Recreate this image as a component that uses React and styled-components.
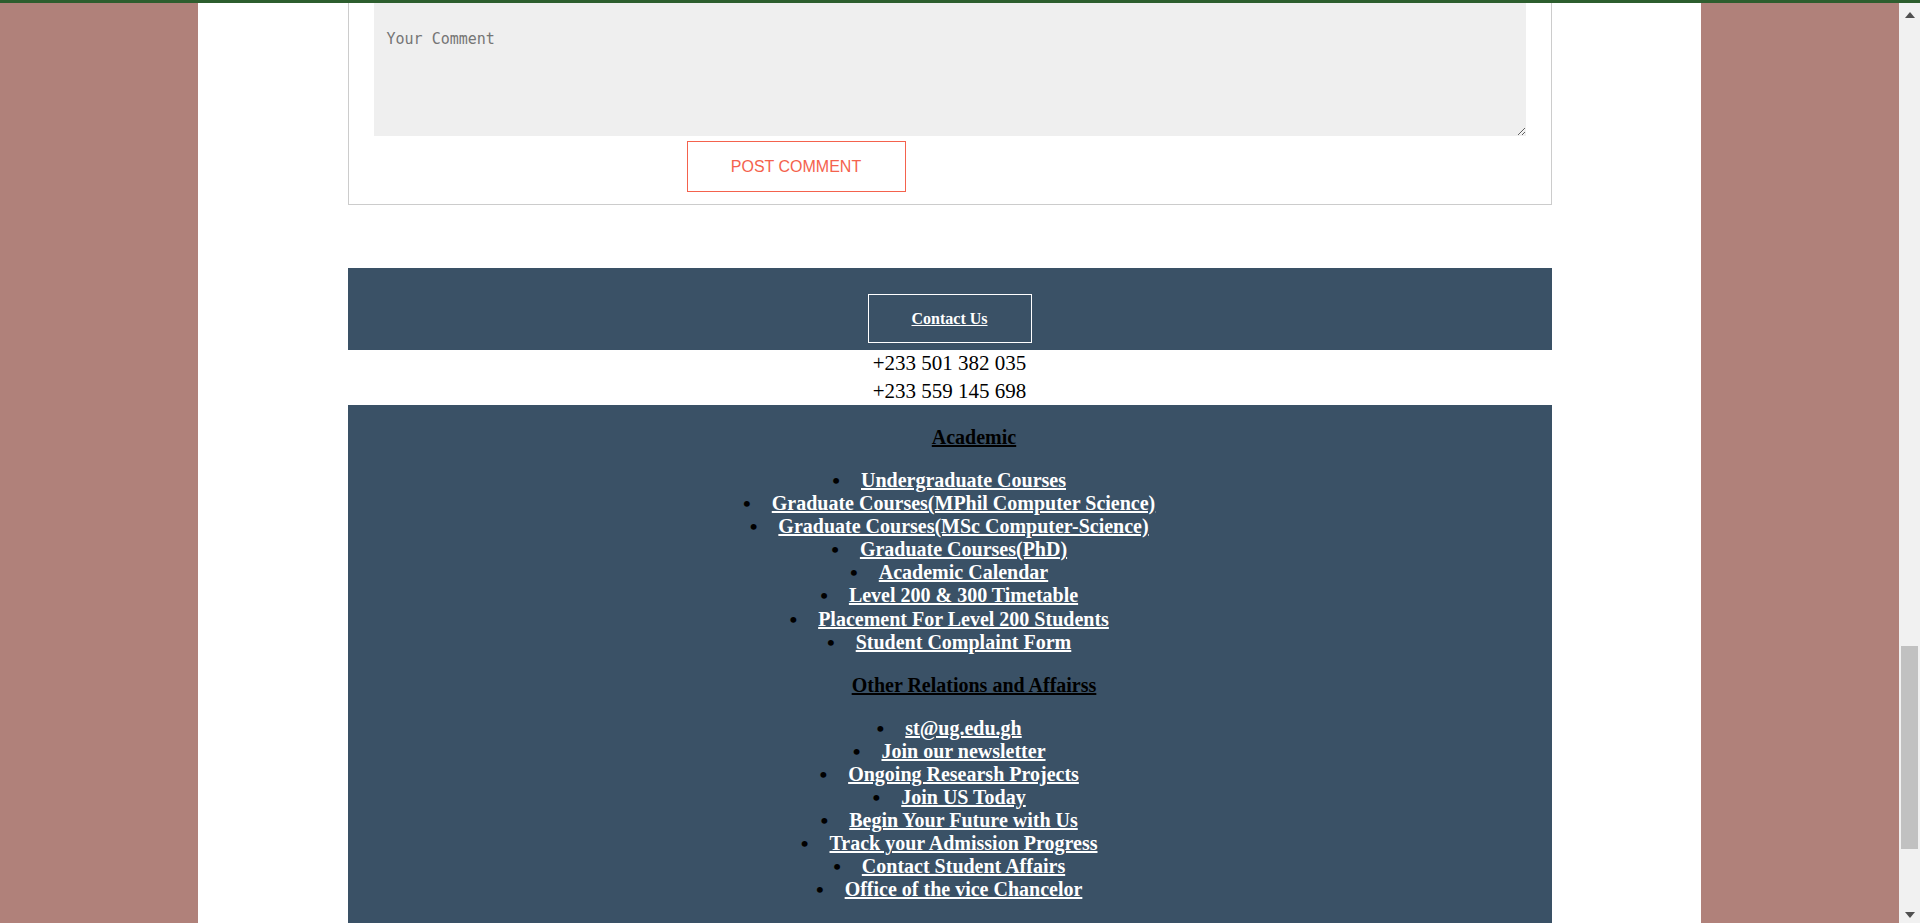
import React from 'react'
import styled, { createGlobalStyle } from 'styled-components';

const GlobalStyle = createGlobalStyle`
  html, body {
    margin: 0;
    padding: 0;
    height: 100%;
    overflow: hidden;
  }
  body {
    font-family: "Liberation Serif", "Times New Roman", serif;
  }
  #root {
    height: 100%;
  }
`;

const Screen = styled.div`
  height: 100vh;
  display: flex;
  flex-direction: column;
`;

const TopStrip = styled.div`
  height: 3px;
  background: #2d5e2e;
  flex-shrink: 0;
`;

const Frame = styled.div`
  flex: 1;
  display: flex;
  min-height: 0;
`;

const Stage = styled.div`
  flex: 1;
  background: #b0817a;
  display: flex;
  justify-content: center;
  overflow: hidden;
`;

const Sheet = styled.div`
  width: 1503px;
  background: #ffffff;
  display: flex;
  flex-direction: column;
  align-items: center;
`;

const CommentBox = styled.div`
  width: 1204px;
  box-sizing: border-box;
  border: 1px solid #cccccc;
  border-top: none;
  padding: 0 25px 12px 25px;
`;

const CommentInput = styled.textarea`
  display: block;
  width: 100%;
  height: 133px;
  box-sizing: border-box;
  background: #efefef;
  border: none;
  outline: none;
  padding: 27px 13px;
  font-family: "DejaVu Sans Mono", "Liberation Mono", monospace;
  font-size: 15px;
  color: #333;
  resize: both;

  &::placeholder {
    color: #757575;
  }
`;

const ButtonRow = styled.div`
  display: flex;
  margin-top: 5px;
  padding-left: 313px;
`;

const PostButton = styled.button`
  width: 219px;
  height: 51px;
  box-sizing: border-box;
  background: #ffffff;
  border: 1px solid #f4624d;
  color: #f4624d;
  font-family: "Liberation Sans", Arial, sans-serif;
  font-size: 16px;
  padding: 0;
  cursor: pointer;
`;

const Footer = styled.footer`
  width: 1204px;
  margin-top: 63px;
`;

const ContactBand = styled.div`
  background: #3a5166;
  display: flex;
  justify-content: center;
  padding: 26px 0 7px;
`;

const ContactLink = styled.a`
  display: block;
  border: 1px solid #ffffff;
  padding: 15px 43px;
  line-height: 17px;
  color: #ffffff;
  font-weight: bold;
  font-size: 16px;
  text-decoration: underline;
`;

const Phones = styled.div`
  background: #ffffff;
  text-align: center;
  font-size: 21px;
  line-height: 27.5px;
  color: #000;
`;

const LinksBand = styled.div`
  background: #3a5166;
  display: flow-root;
  padding: 1px 0 40px;
  text-align: center;
`;

const GroupTitle = styled.h3`
  margin: 20px 0;
  padding-left: 49px;
  font-size: 20px;
  line-height: 23px;
  font-weight: bold;
  color: #000;
  text-decoration: underline;
`;

const LinkList = styled.ul`
  margin: 20px 0;
  padding-left: 28px;
  list-style: none;
  font-size: 20px;
  line-height: 23.1px;
  font-weight: bold;
`;

const LinkItem = styled.li`
  margin: 0;
`;

const Bulleted = styled.span`
  position: relative;

  &::before {
    content: "•";
    position: absolute;
    right: 100%;
    margin-right: 21px;
    color: #000;
    font-size: 22px;
  }
`;

const FooterLink = styled.a`
  color: #ffffff;
  text-decoration: underline;
`;

const ScrollBar = styled.div`
  width: 21px;
  background: #f1f1f1;
  display: flex;
  flex-direction: column;
  flex-shrink: 0;
`;

const ArrowButton = styled.div`
  height: ${props => props.h}px;
  display: flex;
  align-items: center;
  justify-content: center;
  flex-shrink: 0;
`;

const Track = styled.div`
  flex: 1;
  display: flex;
  flex-direction: column;
  align-items: center;
`;

const Thumb = styled.div`
  width: 17px;
  height: 203px;
  margin-top: 619px;
  background: #c1c1c1;
`;

const academic = [
  'Undergraduate Courses',
  'Graduate Courses(MPhil Computer Science)',
  'Graduate Courses(MSc Computer-Science)',
  'Graduate Courses(PhD)',
  'Academic Calendar',
  'Level 200 & 300 Timetable',
  'Placement For Level 200 Students',
  'Student Complaint Form'
];

const relations = [
  'st@ug.edu.gh',
  'Join our newsletter',
  'Ongoing Researsh Projects',
  'Join US Today',
  'Begin Your Future with Us',
  'Track your Admission Progress',
  'Contact Student Affairs',
  'Office of the vice Chancelor'
];

function LinkGroup({ title, items }) {
  return (
    <>
      <GroupTitle>{title}</GroupTitle>
      <LinkList>
        {items.map(item =>
          <LinkItem key={item}>
            <Bulleted><FooterLink href="#">{item}</FooterLink></Bulleted>
          </LinkItem>
        )}
      </LinkList>
    </>
  )
}

export default function App() {
  return (
    <>
      <GlobalStyle />
      <Screen>
        <TopStrip />
        <Frame>
          <Stage>
            <Sheet>
              <CommentBox>
                <CommentInput placeholder="Your Comment" />
                <ButtonRow>
                  <PostButton>POST COMMENT</PostButton>
                </ButtonRow>
              </CommentBox>
              <Footer>
                <ContactBand>
                  <ContactLink href="#">Contact Us</ContactLink>
                </ContactBand>
                <Phones>
                  <div>+233 501 382 035</div>
                  <div>+233 559 145 698</div>
                </Phones>
                <LinksBand>
                  <LinkGroup title="Academic" items={academic} />
                  <LinkGroup title="Other Relations and Affairss" items={relations} />
                </LinksBand>
              </Footer>
            </Sheet>
          </Stage>
          <ScrollBar>
            <ArrowButton h={24}>
              <svg width="10" height="6" viewBox="0 0 10 6">
                <path d="M5 0 L10 6 L0 6 Z" fill="#505050" />
              </svg>
            </ArrowButton>
            <Track>
              <Thumb />
            </Track>
            <ArrowButton h={16}>
              <svg width="10" height="6" viewBox="0 0 10 6">
                <path d="M0 0 L10 0 L5 6 Z" fill="#505050" />
              </svg>
            </ArrowButton>
          </ScrollBar>
        </Frame>
      </Screen>
    </>
  )
}
